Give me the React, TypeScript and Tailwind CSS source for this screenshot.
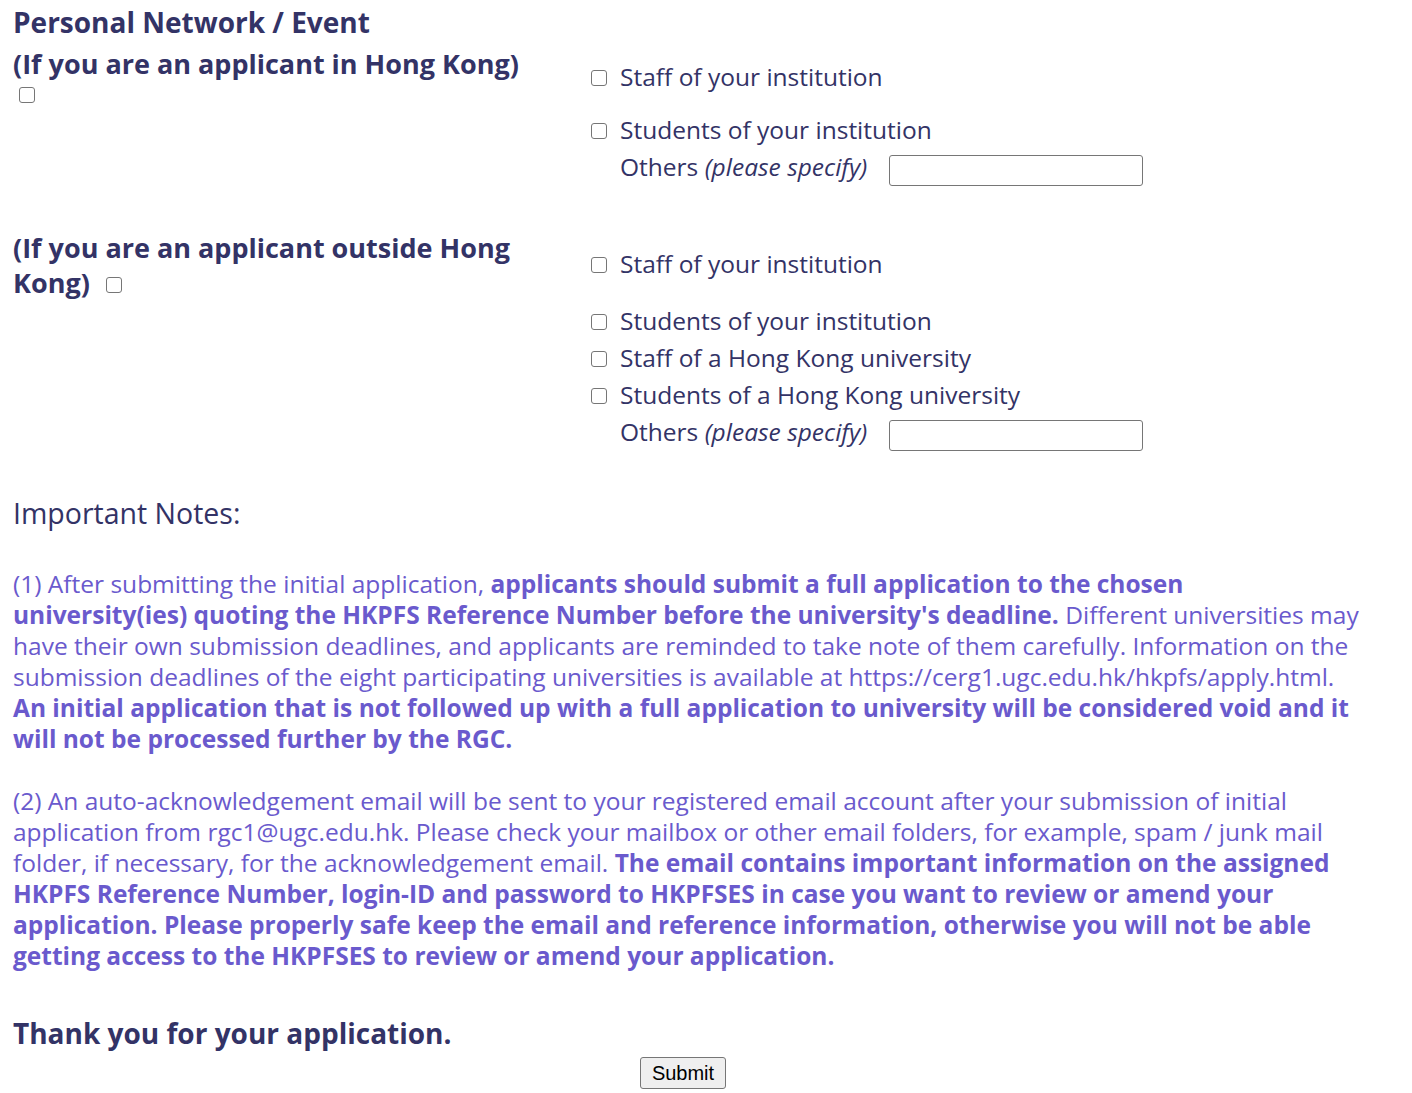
// personal network form section
import type { FC } from "react";

const Box: FC = () => (
  <input
    type="checkbox"
    className="appearance-none w-4 h-4 shrink-0 border border-[#767676] rounded-[3px] bg-white"
  />
);

const Row: FC<{ label: string }> = ({ label }) => (
  <label className="flex items-center h-[37px] gap-[13px] -ml-[29px]">
    <Box />
    <span>{label}</span>
  </label>
);

const Others: FC = () => (
  <div className="flex items-center h-[37px]">
    <span>
      Others <i>(please specify)</i>
    </span>
    <input type="text" className="ml-[22px] mt-[5px] w-[254px] h-[31px] border border-[#767676] rounded-[3px] bg-white" />
  </div>
);

const App: FC = () => {
  return (
    <div className="px-[13px] text-[#333366] font-['Open_Sans',sans-serif] bg-white min-h-screen">
      <h2 className="text-[28px] font-bold leading-[44px]">Personal Network / Event</h2>

      {/* applicant in Hong Kong */}
      <div className="grid grid-cols-[607px_1fr] pt-[2px]">
        <div>
          <h3 className="text-[27px] font-bold leading-[36px]">(If you are an applicant in Hong Kong)</h3>
          <div className="pl-[6px] pt-[3px]"><Box /></div>
        </div>
        <div className="pt-[13px] text-[24.5px]">
          <Row label="Staff of your institution" />
          <div className="h-4" />
          <Row label="Students of your institution" />
          <Others />
        </div>
      </div>

      {/* applicant outside Hong Kong */}
      <div className="grid grid-cols-[607px_1fr] mt-[44px]">
        <div>
          <h3 className="text-[27px] font-bold leading-[35px] w-[520px]">
            (If you are an applicant outside Hong Kong)
            <span className="inline-block align-middle ml-[16px] relative -top-[3px]"><Box /></span>
          </h3>
        </div>
        <div className="pt-[16px] text-[24.5px]">
          <Row label="Staff of your institution" />
          <div className="h-5" />
          <Row label="Students of your institution" />
          <Row label="Staff of a Hong Kong university" />
          <Row label="Students of a Hong Kong university" />
          <Others />
        </div>
      </div>

      <p className="mt-[43px] text-[28.5px] leading-[38px]">Important Notes:</p>

      <div className="mt-[36px] text-[#6a5acd] text-[24.5px] leading-[31px] w-[1385px]">
        <p>
          (1) After submitting the initial application,{" "}
          <b>applicants should submit a full application to the chosen<br />university(ies) quoting the HKPFS Reference Number before the university's deadline.</b>{" "}
          Different universities may<br />have their own submission deadlines, and applicants are reminded to take note of them carefully. Information on the<br />submission deadlines of the eight participating universities is available at https://cerg1.ugc.edu.hk/hkpfs/apply.html.<br />
          <b>An initial application that is not followed up with a full application to university will be considered void and it<br />will not be processed further by the RGC.</b>
        </p>
        <p className="mt-[31px]">
          (2) An auto-acknowledgement email will be sent to your registered email account after your submission of initial<br />application from rgc1@ugc.edu.hk. Please check your mailbox or other email folders, for example, spam / junk mail<br />folder, if necessary, for the acknowledgement email.{" "}
          <b>The email contains important information on the assigned<br />HKPFS Reference Number, login-ID and password to HKPFSES in case you want to review or amend your<br />application. Please properly safe keep the email and reference information, otherwise you will not be able<br />getting access to the HKPFSES to review or amend your application.</b>
        </p>
      </div>

      <p className="mt-[43px] text-[28px] font-bold leading-[38px]">Thank you for your application.</p>

      <div className="flex justify-center pr-[46px] pt-[5px]">
        <button className="font-['Liberation_Sans',Arial,sans-serif] text-[20px] text-black leading-[24px] px-[11px] py-[3px] bg-[#efefef] border border-[#767676] rounded-[3px]">
          Submit
        </button>
      </div>
    </div>
  );
};

export default App;
